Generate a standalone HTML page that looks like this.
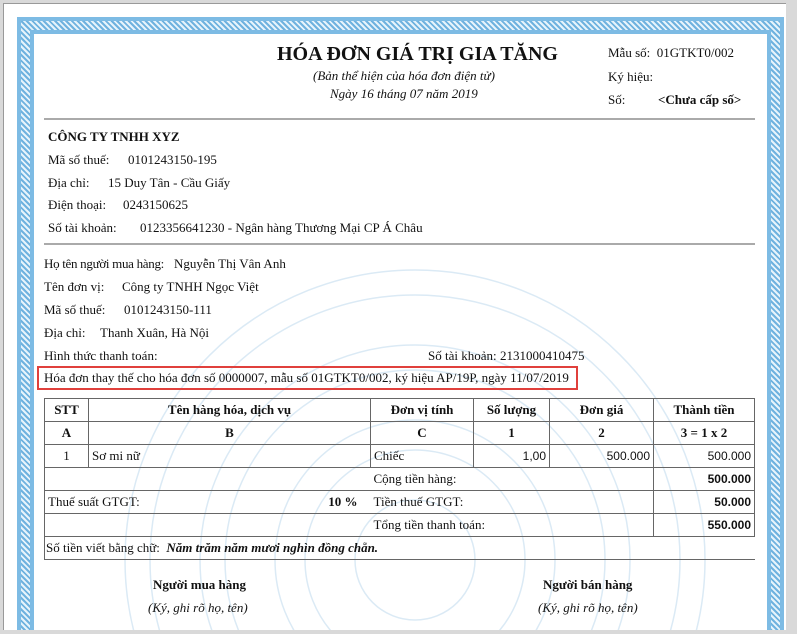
<!DOCTYPE html>
<html><head><meta charset="utf-8"><style>
*{margin:0;padding:0;box-sizing:border-box}
body{width:797px;height:634px;background:#d9d9d9;position:relative;overflow:hidden;font-family:"Liberation Serif",serif;font-size:13px;color:#111}
.page{position:absolute;left:3px;top:3px;width:783px;height:627px;background:#fff;border-left:1px solid #999;border-top:1px solid #999;overflow:hidden}
.frame{position:absolute;left:13px;top:13px;width:767px;height:640px;border:17px solid #7dbbe4;background:#fff}
.frame:before{content:"";position:absolute;inset:-13px;border:9px solid transparent;
 border-image:repeating-linear-gradient(45deg,#e6f3fb 0 2px,#6fb2df 2px 4px) 9;}
.t{position:absolute;white-space:nowrap}
.b{font-weight:bold}.i{font-style:italic}
.hr{position:absolute;left:44px;width:711px;height:2px;background:#aaa}
table{position:absolute;left:44px;top:398px;width:711px;border-collapse:collapse}
td{border:1px solid #666;height:23px;padding:0 3px;font-size:13px}
.c{text-align:center;font-weight:bold}.r{text-align:right;font-family:"Liberation Sans",sans-serif;font-size:12px}
.rb{text-align:right;font-family:"Liberation Sans",sans-serif;font-size:12px;font-weight:bold}
svg.wm{position:absolute;left:0;top:0}
</style></head><body>
<div class="page"><div class="frame"></div></div>
<svg class="wm" width="797" height="630"><g fill="none" stroke="#dbeaf5" stroke-width="1.5">
<circle cx="415" cy="560" r="290"/><circle cx="415" cy="560" r="265"/><circle cx="415" cy="560" r="215"/><circle cx="415" cy="560" r="190"/><circle cx="415" cy="560" r="140"/><circle cx="415" cy="560" r="110"/><circle cx="415" cy="560" r="60"/>
</g></svg>
<div class="t b" style="left:277px;top:43px;font-size:20px">HÓA ĐƠN GIÁ TRỊ GIA TĂNG</div>
<div class="t i" style="left:313px;top:68px">(Bản thể hiện của hóa đơn điện tử)</div>
<div class="t i" style="left:330px;top:86px">Ngày 16 tháng 07 năm 2019</div>
<div class="t" style="left:608px;top:45px">Mẫu số:&nbsp;&nbsp;01GTKT0/002</div>
<div class="t" style="left:608px;top:69px">Ký hiệu:</div>
<div class="t" style="left:608px;top:92px">Số:</div>
<div class="t b" style="left:658px;top:92px">&lt;Chưa cấp số&gt;</div>
<div class="hr" style="top:118px"></div>
<div class="t b" style="left:48px;top:129px">CÔNG TY TNHH XYZ</div>
<div class="t" style="left:48px;top:152px">Mã số thuế:</div><div class="t" style="left:128px;top:152px">0101243150-195</div>
<div class="t" style="left:48px;top:175px">Địa chỉ:</div><div class="t" style="left:108px;top:175px">15 Duy Tân - Cầu Giấy</div>
<div class="t" style="left:48px;top:197px">Điện thoại:</div><div class="t" style="left:123px;top:197px">0243150625</div>
<div class="t" style="left:48px;top:220px">Số tài khoản:</div><div class="t" style="left:140px;top:220px">0123356641230 - Ngân hàng Thương Mại CP Á Châu</div>
<div class="hr" style="top:243px"></div>
<div class="t" style="left:44px;top:256px;letter-spacing:-0.3px">Họ tên người mua hàng:</div><div class="t" style="left:174px;top:256px">Nguyễn Thị Vân Anh</div>
<div class="t" style="left:44px;top:279px">Tên đơn vị:</div><div class="t" style="left:122px;top:279px">Công ty TNHH Ngọc Việt</div>
<div class="t" style="left:44px;top:302px">Mã số thuế:</div><div class="t" style="left:124px;top:302px">0101243150-111</div>
<div class="t" style="left:44px;top:325px">Địa chỉ:</div><div class="t" style="left:100px;top:325px">Thanh Xuân, Hà Nội</div>
<div class="t" style="left:44px;top:348px">Hình thức thanh toán:</div>
<div class="t" style="left:428px;top:348px">Số tài khoản:</div><div class="t" style="left:500px;top:348px">2131000410475</div>
<div style="position:absolute;left:37px;top:366px;width:541px;height:24px;border:2px solid #e0403c"></div>
<div class="t" style="left:44px;top:370px">Hóa đơn thay thế cho hóa đơn số 0000007, mẫu số 01GTKT0/002, ký hiệu AP/19P, ngày 11/07/2019</div>
<table>
<tr><td class="c" style="width:44px">STT</td><td class="c" style="width:282px">Tên hàng hóa, dịch vụ</td><td class="c" style="width:103px">Đơn vị tính</td><td class="c" style="width:76px">Số lượng</td><td class="c" style="width:104px">Đơn giá</td><td class="c">Thành tiền</td></tr>
<tr><td class="c">A</td><td class="c">B</td><td class="c">C</td><td class="c">1</td><td class="c">2</td><td class="c">3 = 1 x 2</td></tr>
<tr><td style="text-align:center">1</td><td>Sơ mi nữ</td><td>Chiếc</td><td class="r">1,00</td><td class="r">500.000</td><td class="r">500.000</td></tr>
<tr><td colspan="2" style="border-right:none"></td><td colspan="3" style="border-left:none">Cộng tiền hàng:</td><td class="rb">500.000</td></tr>
<tr><td colspan="2" style="border-right:none">Thuế suất GTGT:<span class="b" style="float:right;margin-right:10px">10 %</span></td><td colspan="3" style="border-left:none">Tiền thuế GTGT:</td><td class="rb">50.000</td></tr>
<tr><td colspan="2" style="border-right:none"></td><td colspan="3" style="border-left:none">Tổng tiền thanh toán:</td><td class="rb">550.000</td></tr>
<tr><td colspan="6" style="border-right:none;padding-left:1px">Số tiền viết bằng chữ:&nbsp; <b><i>Năm trăm năm mươi nghìn đồng chẵn.</i></b></td></tr>
</table>
<div class="t b" style="left:153px;top:577px">Người mua hàng</div>
<div class="t i" style="left:148px;top:600px">(Ký, ghi rõ họ, tên)</div>
<div class="t b" style="left:543px;top:577px">Người bán hàng</div>
<div class="t i" style="left:538px;top:600px">(Ký, ghi rõ họ, tên)</div>
</body></html>
